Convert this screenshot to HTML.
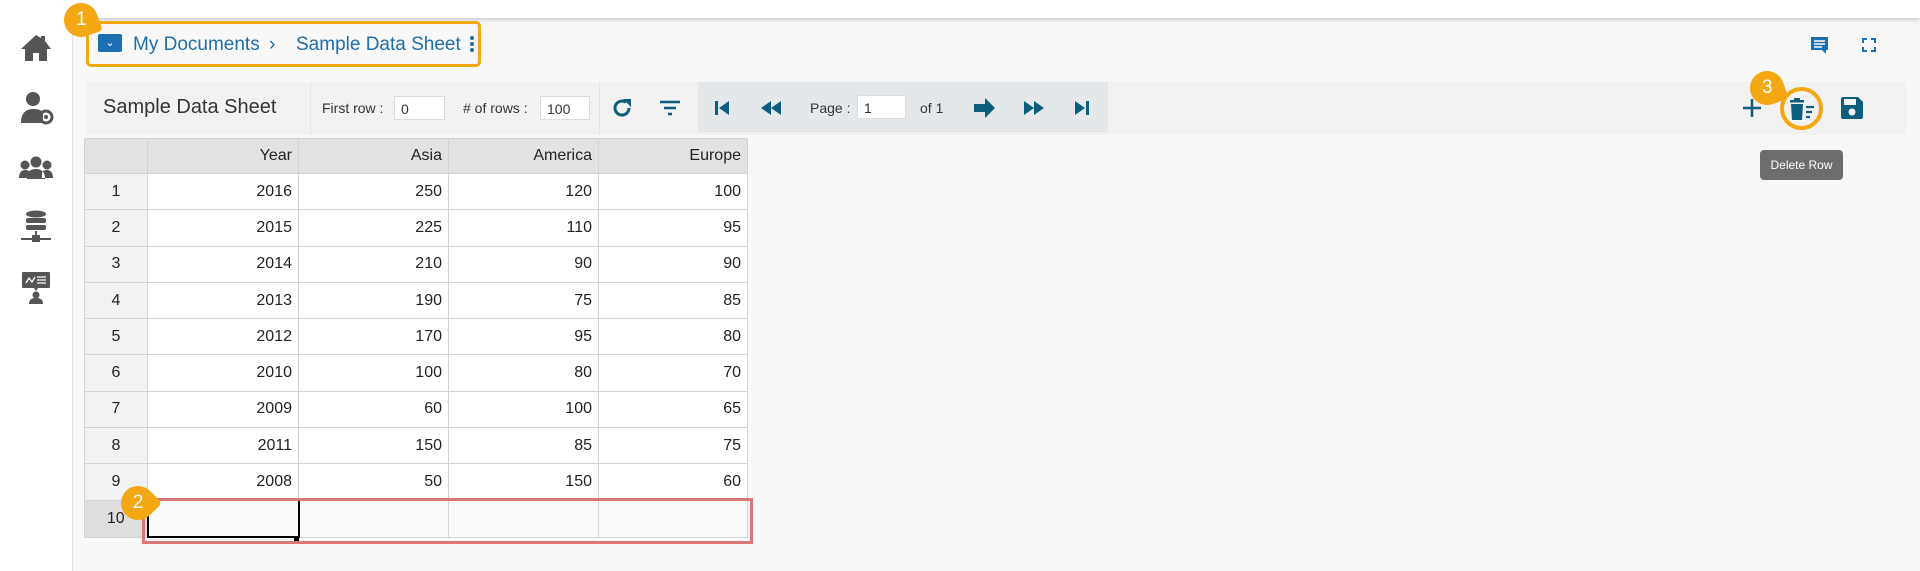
<!DOCTYPE html>
<html><head><meta charset="utf-8"><style>
*{box-sizing:border-box;margin:0;padding:0}
body{width:1920px;height:571px;background:#f8f8f8;font-family:"Liberation Sans",sans-serif;position:relative;overflow:hidden;color:#333}
.topbar{position:absolute;left:0;top:0;width:1920px;height:18px;background:#fff;box-shadow:0 2px 4px rgba(0,0,0,.18)}
.side{position:absolute;left:0;top:18px;width:73px;height:553px;background:#fff;border-right:1px solid #e2e2e2}
.abs{position:absolute}
.badge{position:absolute;width:34px;height:34px;background:#f3a712;color:#fff;font-size:19px;display:flex;align-items:center;justify-content:center}
.tb{position:absolute;left:86px;top:82px;width:1821px;height:53px;background:#f2f2f2}
.inp{position:absolute;background:#fff;border:1px solid #ddd;font-size:14px;padding:4px 6px;height:24px}
.lbl{position:absolute;font-size:14px;color:#333}
table{position:absolute;left:84px;top:138px;border-collapse:collapse;font-size:16px}
td{border:1px solid #d4d4d4;height:36.3px;text-align:right;padding:0 6px;background:#fff;color:#222}
td.i{width:63px;text-align:center;background:#f2f2f2}
tr.h td{background:#e2e2e2;height:35px}
tr.l td{background:#f9f9f9;height:37px}
tr.l td.i{background:#dedede}
</style></head><body>
<div class="topbar"></div>
<div class="side">
<svg class="abs" style="left:20px;top:16px" width="32" height="28" viewBox="0 0 32 28"><path d="M16 1L1 15h4v12h8v-8h6v8h8V15h4L25 7V2h-4v2z" fill="#555"/></svg>
<svg class="abs" style="left:20px;top:73px" width="34" height="34" viewBox="0 0 34 34"><circle cx="13" cy="8" r="7" fill="#555"/><path d="M1 32c0-10 5-14 12-14s9 2 10 4v10z" fill="#555"/><circle cx="26" cy="26" r="6" fill="none" stroke="#555" stroke-width="3"/><circle cx="26" cy="26" r="2" fill="#555"/></svg>
<svg class="abs" style="left:18px;top:138px" width="36" height="24" viewBox="0 0 36 24"><circle cx="18" cy="6" r="5.5" fill="#555"/><circle cx="7" cy="9" r="4.5" fill="#555"/><circle cx="29" cy="9" r="4.5" fill="#555"/><path d="M1 22c0-6 3-8 6-8s5 1 5 3v5zM35 22c0-6-3-8-6-8s-5 1-5 3v5zM9 23c0-8 4-10 9-10s9 2 9 10z" fill="#555"/></svg>
<svg class="abs" style="left:20px;top:192px" width="32" height="34" viewBox="0 0 32 34"><ellipse cx="16" cy="4" rx="10" ry="3.5" fill="#555"/><rect x="6" y="8" width="20" height="5" rx="2" fill="#555"/><rect x="6" y="15" width="20" height="5" rx="2" fill="#555"/><rect x="15" y="21" width="2" height="7" fill="#555"/><rect x="1" y="28" width="30" height="2" fill="#555"/><rect x="12" y="25" width="8" height="7" fill="#555"/></svg>
<svg class="abs" style="left:22px;top:254px" width="28" height="32" viewBox="0 0 28 32"><rect x="0" y="0" width="28" height="16" rx="1" fill="#555"/><path d="M4 11l3-5 3 4 3-5" stroke="#fff" fill="none" stroke-width="1.3"/><path d="M15 5h9M15 8h9M15 11h9" stroke="#fff" stroke-width="1.3"/><path d="M12 16l2 3 2-3z" fill="#555"/><circle cx="14" cy="23" r="3.5" fill="#555"/><path d="M7 32c0-5 3-6 7-6s7 1 7 6z" fill="#555"/></svg>
</div>
<div class="abs" style="left:86px;top:21px;width:395px;height:46px;border:3px solid #f3a712;border-radius:5px"></div>
<div class="badge" style="left:64px;top:3px;border-radius:50% 50% 4px 50%;transform:rotate(-20deg)"><span style="transform:rotate(20deg)">1</span></div>
<div class="abs" style="left:98px;top:34px;width:24px;height:18px;background:#1a6fb5;border-radius:2px;color:#fff;font-size:11px;text-align:center;line-height:18px">&#8964;</div>
<div class="abs" style="left:133px;top:34px;font-size:19px;color:#1f6ea8">My Documents <span style="margin-left:4px">&#8250;</span></div>
<div class="abs" style="left:296px;top:34px;font-size:19px;color:#1f6ea8">Sample Data Sheet</div>
<div class="abs" style="left:470px;top:36px;width:4px"><div style="width:4px;height:4px;border-radius:2px;background:#1f6ea8;margin-bottom:2px"></div><div style="width:4px;height:4px;border-radius:2px;background:#1f6ea8;margin-bottom:2px"></div><div style="width:4px;height:4px;border-radius:2px;background:#1f6ea8"></div></div>
<svg class="abs" style="left:1810px;top:36px" width="20" height="20" viewBox="0 0 20 20"><path d="M1 1h17v13h-2v4l-4-4H1z" fill="#1a6fb5"/><path d="M4 5h11M4 8h11M4 11h8" stroke="#fff" stroke-width="1.4"/></svg>
<svg class="abs" style="left:1862px;top:38px" width="14" height="14" viewBox="0 0 14 14"><path d="M1 5V1h4M9 1h4v4M13 9v4H9M5 13H1V9" fill="none" stroke="#1a6fb5" stroke-width="2"/></svg>
<div class="tb"></div>
<div class="abs" style="left:103px;top:96px;font-size:20px;color:#333">Sample Data Sheet</div>
<div class="abs" style="left:310px;top:82px;width:1px;height:53px;background:#e4e4e4"></div>
<div class="lbl" style="left:322px;top:100px">First row :</div>
<div class="inp" style="left:394px;top:96px;width:51px">0</div>
<div class="lbl" style="left:463px;top:100px"># of rows :</div>
<div class="inp" style="left:540px;top:96px;width:50px">100</div>
<div class="abs" style="left:599px;top:82px;width:1px;height:53px;background:#e4e4e4"></div>
<svg class="abs" style="left:610px;top:96px" width="24" height="24" viewBox="0 0 24 24"><path d="M19 12a7 7 0 1 1-3-5.7" fill="none" stroke="#0d5d7c" stroke-width="3"/><path d="M13 3h8v8z" fill="#0d5d7c"/></svg>
<svg class="abs" style="left:659px;top:99px" width="22" height="18" viewBox="0 0 22 18"><path d="M1 3h20M5 9h12M9 15h4" stroke="#0d5d7c" stroke-width="2.5"/></svg>
<div class="abs" style="left:698px;top:82px;width:410px;height:50px;background:#e5e8ea"></div>
<svg class="abs" style="left:714px;top:100px" width="16" height="16" viewBox="0 0 16 16"><rect x="1" y="1" width="3" height="14" fill="#0d5d7c"/><path d="M15 1v14L5 8z" fill="#0d5d7c"/></svg>
<svg class="abs" style="left:760px;top:101px" width="22" height="14" viewBox="0 0 22 14"><path d="M11 0v14L1 7zM21 0v14L11 7z" fill="#0d5d7c"/></svg>
<div class="lbl" style="left:810px;top:100px">Page :</div>
<div class="inp" style="left:857px;top:95px;width:49px">1</div>
<div class="lbl" style="left:920px;top:100px">of 1</div>
<svg class="abs" style="left:973px;top:98px" width="22" height="20" viewBox="0 0 22 20"><path d="M1 6h11V0l10 10-10 10v-6H1z" fill="#0d5d7c"/></svg>
<svg class="abs" style="left:1023px;top:101px" width="22" height="14" viewBox="0 0 22 14"><path d="M1 0v14l10-7zM11 0v14l10-7z" fill="#0d5d7c"/></svg>
<svg class="abs" style="left:1074px;top:100px" width="16" height="16" viewBox="0 0 16 16"><path d="M1 1v14l10-7z" fill="#0d5d7c"/><rect x="12" y="1" width="3" height="14" fill="#0d5d7c"/></svg>
<svg class="abs" style="left:1742px;top:98px" width="20" height="20" viewBox="0 0 20 20"><path d="M10 1v18M1 10h18" stroke="#0d5d7c" stroke-width="2.5"/></svg>
<div class="abs" style="left:1780px;top:87px;width:43px;height:43px;border:4px solid #f3a712;border-radius:50%"></div>
<svg class="abs" style="left:1789px;top:97px" width="26" height="24" viewBox="0 0 26 24"><rect x="1" y="3" width="14" height="2.5" fill="#0d5d7c"/><rect x="5" y="1" width="6" height="2" fill="#0d5d7c"/><path d="M2 7h12l-1 16H3z" fill="#0d5d7c"/><path d="M17 10h8M17 15h6M17 20h4" stroke="#0d5d7c" stroke-width="2.2"/></svg>
<div class="badge" style="left:1750px;top:71px;border-radius:50% 50% 4px 50%;transform:rotate(-20deg)"><span style="transform:rotate(20deg)">3</span></div>
<svg class="abs" style="left:1840px;top:96px" width="24" height="24" viewBox="0 0 24 24"><path d="M1 3a2 2 0 0 1 2-2h15l5 5v15a2 2 0 0 1-2 2H3a2 2 0 0 1-2-2z" fill="#0d5d7c"/><rect x="4" y="3" width="12" height="6" fill="#f2f2f2"/><circle cx="12" cy="16" r="3.5" fill="#f2f2f2"/></svg>
<div class="abs" style="left:1760px;top:150px;width:83px;height:30px;background:#6d6d6d;border-radius:4px;color:#fff;font-size:12px;text-align:center;line-height:30px">Delete Row</div>
<table>
<tr class="h"><td class="i"></td><td style="width:151px">Year</td><td style="width:150px">Asia</td><td style="width:150px">America</td><td style="width:149px">Europe</td></tr>
<tr><td class="i">1</td><td>2016</td><td>250</td><td>120</td><td>100</td></tr>
<tr><td class="i">2</td><td>2015</td><td>225</td><td>110</td><td>95</td></tr>
<tr><td class="i">3</td><td>2014</td><td>210</td><td>90</td><td>90</td></tr>
<tr><td class="i">4</td><td>2013</td><td>190</td><td>75</td><td>85</td></tr>
<tr><td class="i">5</td><td>2012</td><td>170</td><td>95</td><td>80</td></tr>
<tr><td class="i">6</td><td>2010</td><td>100</td><td>80</td><td>70</td></tr>
<tr><td class="i">7</td><td>2009</td><td>60</td><td>100</td><td>65</td></tr>
<tr><td class="i">8</td><td>2011</td><td>150</td><td>85</td><td>75</td></tr>
<tr><td class="i">9</td><td>2008</td><td>50</td><td>150</td><td>60</td></tr>
<tr class="l"><td class="i">10</td><td style="border:2px solid #000"></td><td></td><td></td><td></td></tr>
</table>
<div class="abs" style="left:142px;top:498px;width:611px;height:46px;border:3px solid #d97777"></div>
<div class="abs" style="left:294px;top:536px;width:5px;height:5px;background:#000"></div>
<div class="badge" style="left:121px;top:486px;border-radius:50% 4px 50% 50%;transform:rotate(45deg)"><span style="transform:rotate(-45deg)">2</span></div>
</body></html>
